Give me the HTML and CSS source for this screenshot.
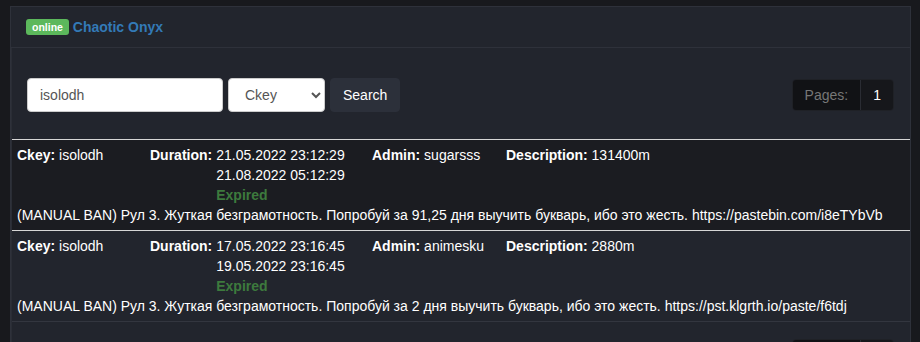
FILE: index.html
```html
<!DOCTYPE html>
<html lang="ru">
<head>
    <meta charset="UTF-8">
    <meta name="viewport" content="width=device-width, initial-scale=1.0">
    <title>Bans - Chaotic Onyx</title>
    <link rel="stylesheet" href="styles.css">
</head>
<body>
    <div class="panel">
        <div class="panel-heading">
            <span class="label-online">online</span>
            <a href="#" class="server-name">Chaotic Onyx</a>
        </div>

        <div class="panel-body">
            <div class="controls">
                <form class="search-form">
                    <input type="text" class="search-input" name="query" value="isolodh">
                    <select class="search-type" name="type">
                        <option>Ckey</option>
                        <option>Admin</option>
                    </select>
                    <button type="submit" class="search-button">Search</button>
                </form>

                <div class="pages">
                    <span class="pages-label">Pages:</span>
                    <a href="#" class="pages-item">1</a>
                </div>
            </div>

            <div class="ban-list">
                <div class="ban-row ban-row-dark">
                    <div class="ban-fields">
                        <div><b>Ckey:</b> isolodh</div>
                        <div class="duration">
                            <b>Duration:</b>
                            <div class="dates">
                                <div>21.05.2022 23:12:29</div>
                                <div>21.08.2022 05:12:29</div>
                                <div class="expired">Expired</div>
                            </div>
                        </div>
                        <div><b>Admin:</b> sugarsss</div>
                        <div><b>Description:</b> 131400m</div>
                    </div>
                    <div class="reason">(MANUAL BAN) Рул 3. Жуткая безграмотность. Попробуй за 91,25 дня выучить букварь, ибо это жесть. https://pastebin.com/i8eTYbVb</div>
                </div>

                <div class="ban-row">
                    <div class="ban-fields">
                        <div><b>Ckey:</b> isolodh</div>
                        <div class="duration">
                            <b>Duration:</b>
                            <div class="dates">
                                <div>17.05.2022 23:16:45</div>
                                <div>19.05.2022 23:16:45</div>
                                <div class="expired">Expired</div>
                            </div>
                        </div>
                        <div><b>Admin:</b> animesku</div>
                        <div><b>Description:</b> 2880m</div>
                    </div>
                    <div class="reason">(MANUAL BAN) Рул 3. Жуткая безграмотность. Попробуй за 2 дня выучить букварь, ибо это жесть. https://pst.klgrth.io/paste/f6tdj</div>
                </div>
            </div>

            <div class="controls-bottom">
                <div class="pages">
                    <span class="pages-label">Pages:</span>
                    <a href="#" class="pages-item">1</a>
                </div>
            </div>
        </div>
    </div>
</body>
</html>
```

FILE: styles.css
```css
body {
    font-family: "Liberation Sans", Arial, sans-serif;
    font-size: 14px;
    line-height: 20px;
    color: #fff;
    background-color: #18191d;
    margin: 6px 9px 0 10px;
    padding: 0;
}

.panel {
    background-color: #22252d;
    border: 1px solid #2e313a;
    border-bottom: none;
}

.panel-heading {
    padding: 10px 15px;
    border-bottom: 1px solid #2e313a;
}

.label-online {
    display: inline-block;
    background-color: #5cb85c;
    color: #fff;
    font-size: 10.5px;
    font-weight: bold;
    line-height: 12px;
    padding: 2px 6px 2px;
    border-radius: 3px;
    vertical-align: 1px;
}

.server-name {
    color: #337ab7;
    font-weight: bold;
    text-decoration: none;
}

.panel-body {
    border-left: 1px solid #2a2d35;
}

.controls {
    display: flex;
    justify-content: space-between;
    align-items: center;
    padding: 30px 16px 27px 15px;
}

.search-form {
    display: flex;
    gap: 5px;
}

.search-input,
.search-type,
.search-button {
    height: 34px;
    font-family: inherit;
    font-size: 14px;
    border-radius: 4px;
    box-sizing: border-box;
}

.search-input {
    width: 196px;
    padding: 6px 12px;
    border: 1px solid #ccc;
    color: #555;
    background-color: #fff;
}

.search-type {
    width: 97px;
    padding: 6px 8px 6px 12px;
    border: 1px solid #ccc;
    color: #555;
    background-color: #fff;
}

.search-button {
    padding: 6px 12px;
    border: 1px solid #2c303a;
    background-color: #2c303a;
    color: #fff;
    cursor: pointer;
}

.pages {
    display: flex;
    border: 1px solid #1f2126;
    border-radius: 4px;
    overflow: hidden;
}

.pages-label {
    padding: 5px 12px;
    background-color: #111215;
    color: #777;
    border-right: 1px solid #2a2c33;
}

.pages-item {
    padding: 5px 12px;
    background-color: #16171b;
    color: #fff;
    text-decoration: none;
}

.ban-list {
    border-top: 1px solid #d6d6d6;
}

.ban-row {
    padding: 5px 5px;
    border-bottom: 1px solid #33363f;
}

.ban-row-dark {
    background-color: #1b1c21;
    border-bottom: 1px solid #d6d6d6;
}

.ban-fields {
    display: grid;
    grid-template-columns: 133px 222px 134px 1fr;
}

.duration {
    display: flex;
    gap: 4px;
}

.expired {
    color: #3d7a3d;
    font-weight: bold;
}

.controls-bottom {
    display: flex;
    justify-content: flex-end;
    padding: 17px 16px 20px 15px;
}
```
